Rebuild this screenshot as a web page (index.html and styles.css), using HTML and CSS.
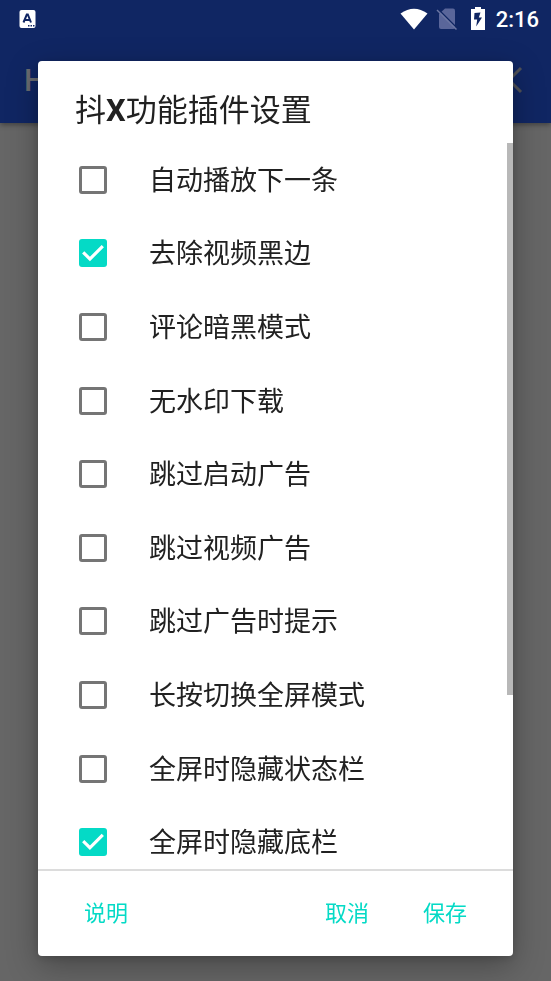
FILE: index.html
```html
<!DOCTYPE html>
<html lang="zh-CN">
<head>
<meta charset="utf-8">
<meta name="viewport" content="width=device-width, initial-scale=1">
<title>抖X功能插件设置</title>
<link rel="stylesheet" href="styles.css">
</head>
<body>
<header class="top">
  <div class="status">
    <svg class="notice" width="18" height="20" viewBox="0 0 18 20" aria-hidden="true">
      <rect x="0.500" y="1" width="16" height="18" rx="2" fill="#fff"/>
      <path d="M4.500 13.500 7.800 5.500h1L12 13.500M5.800 11h5" fill="none" stroke="#102663" stroke-width="2"/>
      <path d="M9 16.800h7" stroke="#102663" stroke-width="1.500" stroke-dasharray="1.500 1"/>
    </svg>
    <svg width="28" height="22" viewBox="0 0 28 22" aria-hidden="true">
      <path d="M14 21.500.5 5.500Q14-4 27.500 5.500Z" fill="#fff"/>
    </svg>
    <svg class="sim" width="22" height="24" viewBox="0 0 22 24" aria-hidden="true">
      <path d="M9 1.500h8q2 0 2 2V21q0 1-2 1H5q-2 0-2-2V7z" fill="#5a669a"/>
      <path d="M2 2l19 19" stroke="#102663" stroke-width="1.500"/>
      <path d="M1 3l19.500 19.500" stroke="#6c77a3" stroke-width="1.500"/>
    </svg>
    <svg class="battery" width="14" height="23" viewBox="0 0 14 23" aria-hidden="true">
      <path d="M4 0h6v2h4v21H0V2h4z" fill="#fff"/>
      <path d="M9.500 5.500 3.500 6 3 12.500h3.200l-1 7L11 10.500H7.800z" fill="#102663"/>
    </svg>
    <span class="clock">2:16</span>
  </div>
  <div class="toolbar">
    <span class="app">H</span>
    <svg width="28" height="28" viewBox="0 0 28 28" aria-hidden="true">
      <path d="M2 2l24 24M26 2 2 26" stroke="#505258" stroke-width="3"/>
    </svg>
  </div>
</header>
<main class="dialog" role="dialog" aria-labelledby="title">
  <h1 id="title">抖<b>X</b>功能插件设置</h1>
  <div class="scroller">
    <div class="options">
      <label><input type="checkbox"><span>自动播放下一条</span></label>
      <label><input type="checkbox" checked><span>去除视频黑边</span></label>
      <label><input type="checkbox"><span>评论暗黑模式</span></label>
      <label><input type="checkbox"><span>无水印下载</span></label>
      <label><input type="checkbox"><span>跳过启动广告</span></label>
      <label><input type="checkbox"><span>跳过视频广告</span></label>
      <label><input type="checkbox"><span>跳过广告时提示</span></label>
      <label><input type="checkbox"><span>长按切换全屏模式</span></label>
      <label><input type="checkbox"><span>全屏时隐藏状态栏</span></label>
      <label><input type="checkbox" checked><span>全屏时隐藏底栏</span></label>
    </div>
    <div class="thumb"></div>
  </div>
  <footer class="actions">
    <button type="button" class="help">说明</button>
    <button type="button">取消</button>
    <button type="button">保存</button>
  </footer>
</main>
</body>
</html>
```
FILE: styles.css
```css
* {
  box-sizing: border-box;
}

body {
  margin: 0;
  min-height: 100vh;
  background: #666;
  color: #212121;
  font-family: Roboto, "Noto Sans CJK SC", sans-serif;
}

.top {
  background: #102663;
  box-shadow: 0 2px 5px rgba(0, 0, 0, .35);
}

.status {
  display: flex;
  align-items: center;
  height: 37px;
  padding: 0 12px 0 19px;
}

.notice {
  margin-right: auto;
}

.sim {
  margin-left: 8px;
}

.battery {
  margin: 0 11px 0 13px;
}

.clock {
  padding-top: 2px;
  color: #fff;
  font-size: 22px;
  font-weight: 500;
}

.toolbar {
  display: flex;
  align-items: center;
  justify-content: space-between;
  height: 86px;
  padding: 0 28px 0 24px;
  color: #696b70;
}

.app {
  font-size: 31px;
  font-weight: 500;
}

.dialog {
  position: fixed;
  inset: 61px 38px 25px;
  display: flex;
  flex-direction: column;
  overflow: hidden;
  border-radius: 4px;
  background: #fff;
  box-shadow: 0 10px 32px rgba(0, 0, 0, .3), 0 2px 8px rgba(0, 0, 0, .15);
}

h1 {
  height: 82px;
  margin: 0;
  padding: 28px 37px 0;
  font-size: 31px;
  font-weight: 400;
  line-height: 44px;
}

h1 b {
  font-weight: 700;
}

.scroller {
  position: relative;
  flex: 1;
  min-height: 0;
  overflow: hidden;
}

.options {
  display: grid;
  grid-auto-rows: 1fr;
  height: calc(100% + 10px);
}

label {
  display: flex;
  align-items: center;
  gap: 42px;
  padding-left: 41px;
  font-size: 27px;
  line-height: 40px;
}

label span {
  padding-top: 2px;
}

input {
  appearance: none;
  width: 28px;
  height: 28px;
  margin: 0;
  border: 3px solid #757575;
  border-radius: 3px;
}

input:checked {
  border: 0;
  background: #04dac6;
}

input:checked::after {
  content: "";
  display: block;
  height: 100%;
  background: #fff;
  clip-path: polygon(39% 78%, 11% 50%, 19% 42%, 39% 62%, 81% 20%, 89% 28%);
}

.thumb {
  position: absolute;
  top: 0;
  right: 0;
  width: 6px;
  height: 76%;
  background: #b8b8b8;
}

.actions {
  display: flex;
  align-items: center;
  gap: 14px;
  height: 87px;
  padding: 0 26px;
  border-top: 2px solid #dcdcdc;
}

button {
  padding: 12px 20px;
  border: 0;
  background: none;
  color: #04dac6;
  font: inherit;
  font-size: 22px;
  line-height: 32px;
}

.help {
  margin-right: auto;
}
```
